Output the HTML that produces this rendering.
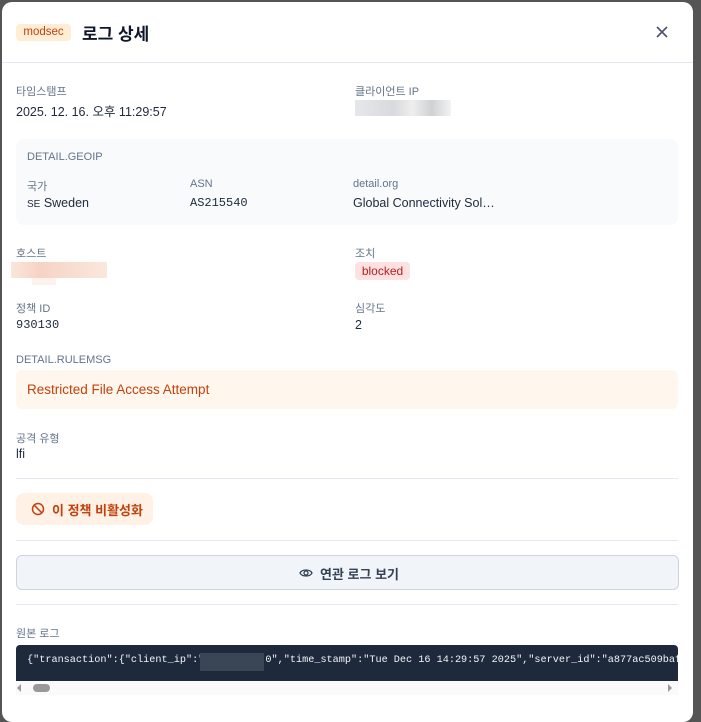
<!DOCTYPE html>
<html><head><meta charset="utf-8"><style>
*{box-sizing:border-box;margin:0;padding:0}
body{width:701px;height:706px;background:#555;overflow:hidden;font-family:"Liberation Sans","Noto Sans CJK KR",sans-serif;position:relative}
.m{position:absolute;left:2px;top:2px;width:691px;height:720px;background:#fff;border-radius:10px}
.a{position:absolute;white-space:nowrap}
.lb{font-size:11px;color:#64748b}
.v{font-size:12.5px;color:#1e293b}
.mono{font-family:"Liberation Mono",monospace}
.hr{position:absolute;left:16px;width:662px;height:1px;background:#e2e8f0}
</style></head><body>
<div class="m"></div>
<div class="a" style="left:16px;top:24px;width:55px;height:17px;background:#ffedd5;border-radius:4px;font-size:11.5px;color:#c2410c;text-align:center;line-height:17px">modsec</div>
<div class="a" style="left:82px;top:20px;font-size:17px;font-weight:bold;color:#0f172a">로그 상세</div>
<svg class="a" style="left:655px;top:25px" width="14" height="14" viewBox="0 0 14 14"><path d="M2 2L12 12M12 2L2 12" stroke="#475569" stroke-width="1.6"/></svg>
<div class="a" style="left:2px;top:62px;width:691px;height:1px;background:#e2e8f0"></div>

<div class="a lb" style="left:16px;top:83px">타임스탬프</div>
<div class="a v" style="left:16px;top:101px">2025. 12. 16. 오후 11:29:57</div>
<div class="a lb" style="left:355px;top:83px">클라이언트 IP</div>
<div class="a" style="left:355px;top:100px;width:96px;height:16px;background:linear-gradient(90deg,#e5e7eb 0,#d9dadd 40%,#eee 60%,#d0d1d4 80%,#f3f3f3 100%)"></div>

<div class="a" style="left:16px;top:139px;width:662px;height:86px;background:#f8fafc;border-radius:8px"></div>
<div class="a lb" style="left:27px;top:151px">DETAIL.GEOIP</div>
<div class="a lb" style="left:27px;top:178px">국가</div>
<div class="a v" style="left:27px;top:196px"><span style="font-size:10px">SE</span> Sweden</div>
<div class="a lb" style="left:190px;top:178px">ASN</div>
<div class="a v mono" style="left:190px;top:196px;font-size:12px">AS215540</div>
<div class="a lb" style="left:353px;top:178px">detail.org</div>
<div class="a v" style="left:353px;top:196px">Global Connectivity Sol…</div>

<div class="a lb" style="left:16px;top:245px">호스트</div>
<div class="a" style="left:11px;top:262px;width:96px;height:16px;background:linear-gradient(90deg,#fbe6dc,#f6d3c4 30%,#f8dccf 60%,#fbe7de)"></div>
<div class="a" style="left:32px;top:278px;width:24px;height:7px;background:#fdf2ee"></div>
<div class="a lb" style="left:355px;top:245px">조치</div>
<div class="a" style="left:355px;top:262px;width:55px;height:18px;background:#fee2e2;border-radius:4px;font-size:12px;color:#b91c1c;text-align:center;line-height:18px">blocked</div>

<div class="a lb" style="left:16px;top:300px">정책 ID</div>
<div class="a v mono" style="left:16px;top:318px;font-size:12px">930130</div>
<div class="a lb" style="left:355px;top:300px">심각도</div>
<div class="a v" style="left:355px;top:318px">2</div>

<div class="a lb" style="left:16px;top:354px">DETAIL.RULEMSG</div>
<div class="a" style="left:16px;top:370px;width:662px;height:39px;background:#fff7ed;border-radius:6px"></div>
<div class="a" style="left:27px;top:382px;font-size:13.5px;color:#c2410c">Restricted File Access Attempt</div>

<div class="a lb" style="left:16px;top:430px">공격 유형</div>
<div class="a v" style="left:16px;top:447px">lfi</div>
<div class="hr" style="top:478px"></div>

<div class="a" style="left:16px;top:493px;width:137px;height:32px;background:#fff1e6;border-radius:8px"></div>
<svg class="a" style="left:31px;top:502px" width="14" height="14" viewBox="0 0 14 14"><circle cx="7" cy="7" r="5.5" fill="none" stroke="#c2410c" stroke-width="1.5"/><path d="M3.2 3.2L10.8 10.8" stroke="#c2410c" stroke-width="1.5"/></svg>
<div class="a" style="left:52px;top:500px;font-size:13px;font-weight:bold;color:#c2410c">이 정책 비활성화</div>
<div class="hr" style="top:540px"></div>

<div class="a" style="left:16px;top:555px;width:663px;height:35px;background:#f1f5f9;border:1px solid #cbd5e1;border-radius:6px"></div>
<svg class="a" style="left:299px;top:566px" width="14" height="14" viewBox="0 0 14 14"><path d="M1 7C3 3 11 3 13 7C11 11 3 11 1 7Z" fill="none" stroke="#334155" stroke-width="1.3"/><circle cx="7" cy="7" r="2" fill="none" stroke="#334155" stroke-width="1.3"/></svg>
<div class="a" style="left:320px;top:564px;font-size:13px;font-weight:bold;color:#334155">연관 로그 보기</div>
<div class="hr" style="top:604px"></div>

<div class="a lb" style="left:16px;top:625px">원본 로그</div>
<div class="a" style="left:16px;top:645px;width:662px;height:36px;background:#1e293b;border-radius:4px 4px 0 0;overflow:hidden">
<div class="a mono" style="left:11px;top:10px;font-size:10.2px;color:#f1f5f9;white-space:pre">{"transaction":{"client_ip":"4         0","time_stamp":"Tue Dec 16 14:29:57 2025","server_id":"a877ac509bafe3</div>
<div class="a" style="left:184px;top:8px;width:64px;height:18px;background:#3a4556"></div>
</div>
<div class="a" style="left:16px;top:681px;width:662px;height:14px;background:#fafafa"></div>
<div class="a" style="left:33px;top:684px;width:17px;height:8px;background:#999;border-radius:4px"></div>
<div class="a" style="left:17px;top:684px;width:0;height:0;border:4px solid transparent;border-right-color:#999;border-left:0"></div>
<div class="a" style="left:668px;top:684px;width:0;height:0;border:4px solid transparent;border-left-color:#999;border-right:0"></div>
</body></html>
